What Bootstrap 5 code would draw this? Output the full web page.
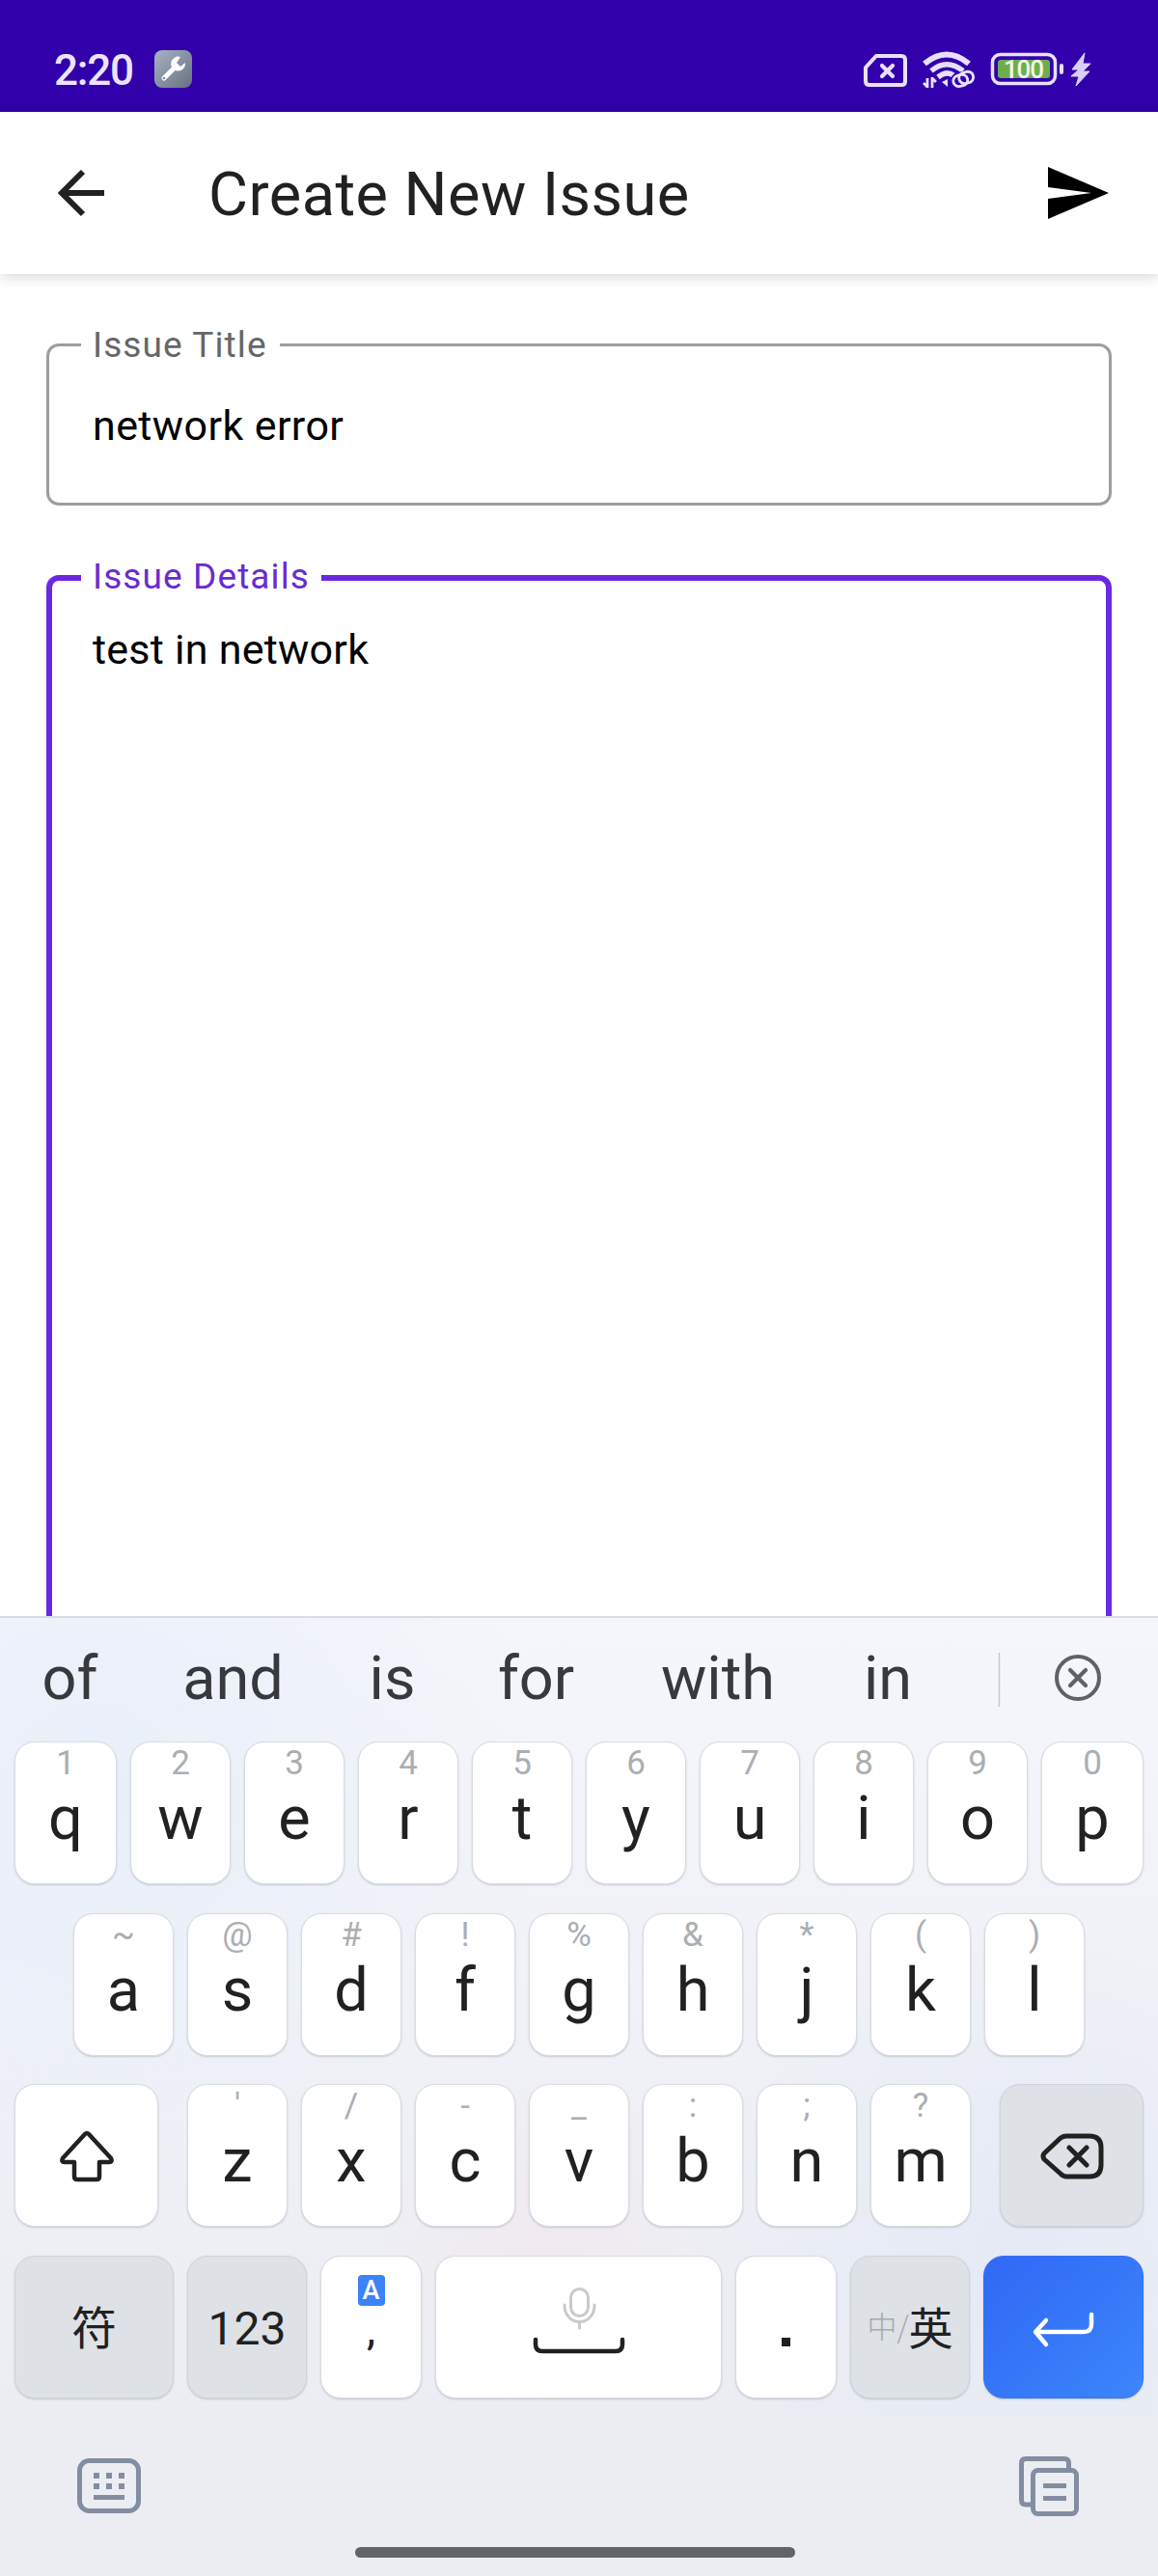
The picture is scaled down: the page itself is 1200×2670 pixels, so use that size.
<!DOCTYPE html>
<html lang="en">
<head>
<meta charset="utf-8">
<meta name="viewport" content="width=device-width, initial-scale=1">
<title>Create New Issue</title>
<link href="https://cdn.jsdelivr.net/npm/bootstrap@5.3.0/dist/css/bootstrap.min.css" rel="stylesheet">
<style>
body{font-family:Roboto,"Noto Sans CJK SC",sans-serif;background:#fff;color:#212121;overflow:hidden}
svg{display:block;flex:none}
.phone{width:1200px;height:2670px;overflow:hidden}
.statusbar{height:116px;background:#3100ab;padding:52px 70px 0 56px}
.clock{font-size:44px;line-height:40px;color:#ece4ff;font-weight:500;width:104px;white-space:nowrap;letter-spacing:-1.2px;padding-top:1px}
.appbar{height:168px;padding:0 51px 0 60px;box-shadow:0 2px 14px rgba(0,0,0,.18);background:#fff}
.apptitle{font-size:63px;line-height:80px;color:#212121;margin-left:103px;padding-top:3px;letter-spacing:.5px;white-space:nowrap}
.formarea{height:1391px;padding:72px 48px 0;overflow:hidden}
.outlined{border:3px solid #9e9e9e;border-radius:13px;height:168px;margin-bottom:72px;color:#000}
.outlined.active{border:6px solid #6b28e2;height:1200px}
.flabel{left:33px;top:-21px;width:206px;height:40px;line-height:40px;padding-left:12px;background:#fff;color:#666;font-size:37px;letter-spacing:1.1px;white-space:nowrap}
.active .flabel{color:#6a2bd0;left:30px;top:-24px;width:249px}
.fvalue{font-size:43px;line-height:60px;padding:52px 0 0 45px;letter-spacing:.4px;white-space:nowrap}
.active .fvalue{padding:41px 0 0 42px;letter-spacing:.25px}
.kbd-panel{height:995px;border-top:2px solid #d9dcdf;
background:linear-gradient(rgba(236,237,242,0) 829px,#ecedf2 829px),radial-gradient(circle at 8% 18%,#e9eff9 0,rgba(233,239,249,0) 34%),radial-gradient(circle at 47% 65%,#f0eaef 0,rgba(240,234,239,0) 20%),radial-gradient(circle at 88% 66%,#e5eaf5 0,rgba(229,234,245,0) 28%),linear-gradient(#f5f6fb,#ebedf2 84%,#ebedf2)}
.suggest{height:128px;color:#37393d;font-size:63px;line-height:70px}
.suggest span{white-space:nowrap;text-align:center;padding-right:2px;margin-top:-2px}
.keyrow{height:148px;margin-bottom:29.6px;gap:14px}
.key{width:104px;height:148px;border-radius:21px;background:#fff;border:1px solid #d9dce2;box-shadow:0 1px 2px rgba(120,130,150,.35);padding-top:2px;color:#212121}
.key.fn{background:#dee1e6;border-color:#d0d4da}
.hint{font-size:35px;line-height:40px;height:40px;color:#abaeb2}
.letter{font-size:63px;line-height:74px;height:74px}
.edge{width:106px}.comma-key{width:105px}.wide{width:149px}
.cjk{font-family:"Noto Sans CJK SC",sans-serif}
.enter{background:linear-gradient(135deg,#3068f6,#3b86fa);border-color:#3470f6}
.abadge{width:28px;height:32px;border-radius:4px;background:#3d82f7;color:#fff;font-size:27px;line-height:32px;font-weight:500;margin-top:17px}
.home{width:456px;height:11px;border-radius:6px;background:#636467;margin:32px 0 0 368px}
</style>
</head>
<body>
<div class="phone d-flex flex-column">
  <header class="statusbar d-flex align-items-start flex-shrink-0">
    <div class="clock">2:20</div>
    <svg width="39" height="39" viewBox="0 0 39 39"><defs><linearGradient id="wg" x1="0" y1="0" x2="1" y2="1"><stop offset="0" stop-color="#a9b2c4"/><stop offset="1" stop-color="#667080"/></linearGradient></defs><rect width="39" height="39" rx="8" fill="url(#wg)"/><path d="M10 29L21 18" stroke="#fff" stroke-width="5" stroke-linecap="round"/><path d="M27 7a7.500 7.500 0 1 0 5 6l-5 4-4-4z" fill="#fff"/><circle cx="10" cy="29" r="1.300" fill="#7f899a"/></svg>
    <svg class="ms-auto" width="236" height="40" viewBox="894 52 236 40" fill="none" stroke="#e9e0ff">
      <path d="M908 58h26q4 0 4 4v23q0 3-4 3h-33q-4 0-4-4v-14z" stroke-width="4"/><path d="M914 68l11 11M925 68l-11 11" stroke-width="4.200" stroke-linecap="round"/>
      <path d="M958 66Q981 47 1004 66" stroke-width="6"/><path d="M965 73.500Q981 60 998 73.500" stroke-width="5.500"/><path d="M972 80q9-7 16-2" stroke-width="5.500"/>
      <path d="M961 91V81M961 90l-4-4M966 80v11M966 81l4 4" stroke-width="2.800"/><path d="M982 82v8l-6-5z" fill="#e9e0ff" stroke="none"/>
      <g transform="rotate(-14 998 82)"><rect x="987" y="76" width="22" height="12" rx="6" fill="#3100ab" stroke="#3100ab" stroke-width="4"/><rect x="987.500" y="77" width="15" height="11.500" rx="5.700" stroke-width="2.800"/><rect x="994" y="75.500" width="15" height="11.500" rx="5.700" stroke-width="2.800"/></g>
      <rect x="1028.500" y="56.500" width="65" height="30" rx="8" stroke-width="3.500"/><rect x="1034" y="62" width="54" height="19" rx="3" fill="#6cae4c" stroke="none"/><rect x="1098" y="66" width="4" height="11" rx="2" fill="#e9e0ff" stroke="none"/>
      <text x="1061" y="81" text-anchor="middle" font-size="26" font-weight="500" fill="#f4f6ea" stroke="none" textLength="42">100</text>
      <path d="M1124 55l-13 17h7l-8 7h8l-3 10 14-15h-7l8-8h-8z" fill="#d9cffa" stroke="#d9cffa" stroke-width="1"/>
    </svg>
  </header>
  <nav class="appbar d-flex align-items-center flex-shrink-0 position-relative">
    <svg width="53" height="56" viewBox="0 0 53 56" fill="none" stroke="#212121" stroke-width="6"><path d="M26 6L4 28l22 22M4 28h44"/></svg>
    <div class="apptitle">Create New Issue</div>
    <svg class="ms-auto" width="63" height="54" viewBox="0 0 63 54"><path d="M0 0L63 27 0 54V33L45 27 0 21z" fill="#000"/></svg>
  </nav>
  <main class="formarea flex-shrink-0">
    <div class="outlined position-relative"><div class="flabel position-absolute">Issue Title</div><div class="fvalue">network error</div></div>
    <div class="outlined active position-relative"><div class="flabel position-absolute">Issue Details</div><div class="fvalue">test in network</div></div>
  </main>
  <section class="kbd-panel flex-shrink-0">
    <div class="suggest d-flex align-items-center">
      <span style="width:147px">of</span><span style="width:191px">and</span><span style="width:139px">is</span><span style="width:159px">for</span><span style="width:218px">with</span><span style="width:134px">in</span>
      <svg width="212" height="60" viewBox="988 1710 212 60" fill="none" stroke="#606163"><path d="M1035.500 1712v56" stroke="#c6c8cc" stroke-width="1.500"/><circle cx="1117" cy="1738" r="22" stroke-width="4"/><path d="M1109 1730l16 16m0-16l-16 16" stroke-width="4.200" stroke-linecap="round"/></svg>
    </div>
    <div id="letters"></div>
    <div class="keyrow d-flex justify-content-center">
      <div class="key fn cjk d-flex justify-content-center" style="width:165px;padding-top:38px;font-size:47px;line-height:66px">符</div>
      <div class="key fn d-flex justify-content-center" style="width:124px;padding-top:42px;font-size:48px;line-height:66px">123</div>
      <div class="key comma-key d-flex flex-column align-items-center"><div class="abadge text-center">A</div><div style="font-size:46px;line-height:54px;margin-top:-3px">,</div></div>
      <div class="key d-flex justify-content-center" style="width:297px">
        <svg width="100" height="76" viewBox="550 2367 100 76" fill="none" style="margin-top:26px" stroke-linecap="round"><rect x="591.500" y="2372.500" width="18" height="28" rx="9" stroke="#c8cacd" stroke-width="3"/><path d="M585 2389v1a15 16 0 0 0 31 0v-1M600.500 2407v6" stroke="#c8cacd" stroke-width="3"/><path d="M555 2425v5q0 7 7 7h76q7 0 7-7v-5" stroke="#212121" stroke-width="4.500"/></svg>
      </div>
      <div class="key comma-key d-flex justify-content-center" style="padding-top:84px"><svg width="9" height="9"><rect width="9" height="9" fill="#212121"/></svg></div>
      <div class="key fn cjk d-flex justify-content-center" style="width:124px;padding-top:38px;font-size:46px;line-height:66px"><span style="font-size:31px;color:#a6a9ad;font-weight:300">中/</span>英</div>
      <div class="key enter d-flex justify-content-center" style="width:166px"><svg width="66" height="42" viewBox="1070 2393 66 42" style="margin-top:53px" fill="none" stroke="#fff" stroke-width="4.500" stroke-linecap="round" stroke-linejoin="round"><path d="M1132 2398v10q0 8-8 8h-50M1085 2404l-11 12 11 13"/></svg></div>
    </div>
    <div class="d-flex justify-content-between" style="padding:31px 80px 0 80px">
      <svg width="66" height="62" viewBox="0 0 66 62" fill="#828da0"><rect x="2.500" y="4.500" width="61" height="52" rx="10" fill="none" stroke="#828da0" stroke-width="5"/><path d="M17 17h6v6h-6zm13 0h6v6h-6zm13 0h6v6h-6zM17 28h6v6h-6zm13 0h6v6h-6zm13 0h6v6h-6zM17 40h32v5H17z"/></svg>
      <svg width="64" height="62" viewBox="0 0 64 62" fill="none" stroke="#828da0" stroke-width="5"><path d="M12 50H7q-4.500 0-4.500-4.500V7q0-4.500 4.500-4.500h40q4.500 0 4.500 4.500v6"/><rect x="14.500" y="14.500" width="45" height="45" rx="5"/><path d="M25 30.500h24M25 43.500h24"/></svg>
    </div>
    <div class="home"></div>
  </section>
</div>
<script src="https://cdn.jsdelivr.net/npm/bootstrap@5.3.0/dist/js/bootstrap.bundle.min.js"></script>
<script>
const rows=[["qwertyuiop","1234567890"],["asdfghjkl","~@#!%&*()"],["zxcvbnm","'/-_:;?"]];
const shift='<div class="key wide d-flex justify-content-center align-items-center" style="margin-right:16px"><svg width="58" height="54" viewBox="0 0 58 54" fill="none" stroke="#212121" stroke-width="4.500" stroke-linejoin="round"><path d="M29 3Q30 3 31 4L54 29Q56 33 52 33H42V48Q42 51 39 51H19Q16 51 16 48V33H6Q2 33 4 29L27 4Q28 3 29 3z"/></svg></div>';
const back='<div class="key wide fn d-flex justify-content-center align-items-center" style="margin-left:16px"><svg width="66" height="48" viewBox="0 0 66 48" fill="none" stroke="#212121" stroke-width="5" stroke-linecap="round" stroke-linejoin="round"><path d="M27 3h24q12 0 12 12v18q0 12-12 12H27q-3 0-6-3L4 27q-2-3 0-6L21 5q3-2 6-2zM30 15l18 18m0-18L30 33"/></svg></div>';
document.getElementById("letters").innerHTML=rows.map(([l,h],r)=>'<div class="keyrow d-flex justify-content-center">'+(r==2?shift:"")+[...l].map((c,i)=>`<div class="key ${c=="q"||c=="p"?"edge":""} d-flex flex-column align-items-center"><div class="hint">${h[i]=="&"?"&amp;":h[i]}</div><div class="letter">${c}</div></div>`).join("")+(r==2?back:"")+"</div>").join("");
</script>
</body>
</html>
